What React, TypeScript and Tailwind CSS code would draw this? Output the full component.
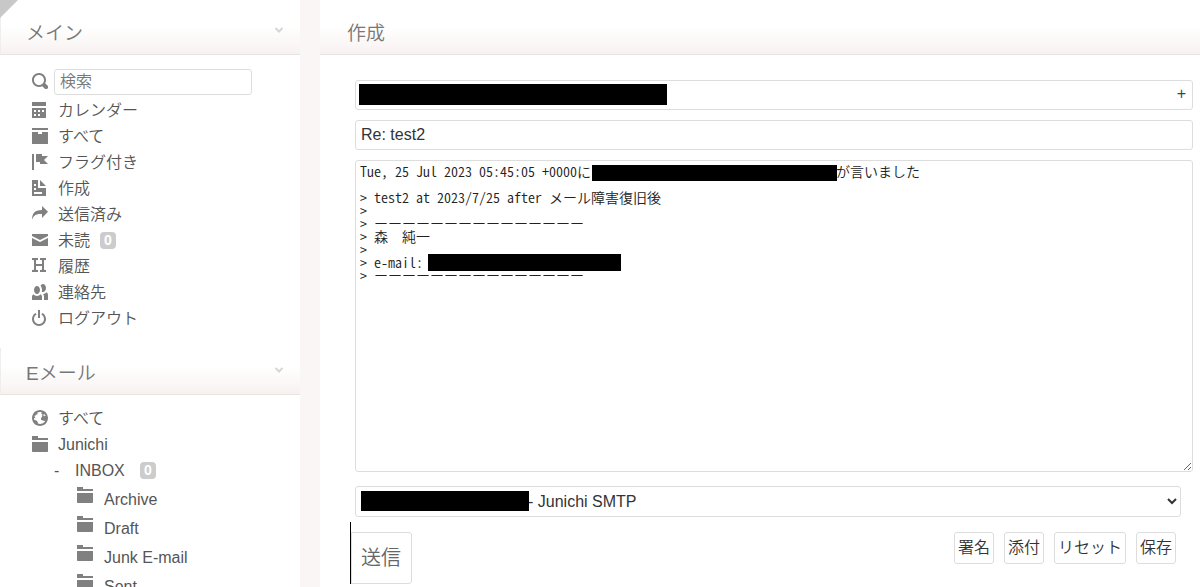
import { useState } from "react";
import type { ReactNode } from "react";

/** 8x8 グリッドのアイコン */
const ICONS = {
  search:
    "M3.5 0c-1.93 0-3.5 1.57-3.5 3.5s1.57 3.5 3.5 3.5c.59 0 1.17-.14 1.66-.41a1 1 0 0 0 .13.13l1 1a1.02 1.02 0 1 0 1.44-1.44l-1-1a1 1 0 0 0-.16-.13c.27-.49.44-1.06.44-1.66 0-1.93-1.55-3.5-3.5-3.5zm0 1c1.39 0 2.5 1.11 2.5 2.5 0 .66-.24 1.27-.66 1.72-.01.01-.02.02-.03.03a1 1 0 0 0-.13.13c-.44.4-1.04.63-1.69.63-1.39 0-2.5-1.11-2.5-2.5s1.11-2.5 2.5-2.5z",
  calendar:
    "M0 0v2h7v-2h-7zm0 3v4.91c0 .05.04.09.09.09h6.81c.05 0 .09-.04.09-.09v-4.91h-7zm1 1h1v1h-1v-1zm2 0h1v1h-1v-1zm2 0h1v1h-1v-1zm-4 2h1v1h-1v-1zm2 0h1v1h-1v-1z",
  box: "M0 0v1h8v-1h-8zm0 2v5.91c0 .05.04.09.09.09h7.81c.05 0 .09-.04.09-.09v-5.91h-2.97v1.03h-2v-1.03h-3z",
  flag: "M0 0v8h1v-8h-1zm2 0v4h2v1h4l-2-1.97 2-2.03h-3v-1h-3z",
  document:
    "M0 0v8h7v-4h-4v-4h-3zm4 0v3h3l-3-3zm-3 2h1v1h-1v-1zm0 2h1v1h-1v-1zm0 2h4v1h-4v-1z",
  share: "M5 0v2c-4 0-5 2.05-5 5 .52-1.98 2-3 4-3h1v2l3-3.16-3-2.84z",
  envelope: "M0 1v1l4 2 4-2v-1h-8zm0 2v4h8v-4l-4 2-4-2z",
  history:
    "M0 0v1h.5c.28 0 .5.22.5.5v4c0 .28-.22.5-.5.5h-.5v1h3v-1h-.5c-.28 0-.5-.22-.5-.5v-1.5h3v1.5c0 .28-.22.5-.5.5h-.5v1h3v-1h-.5c-.28 0-.5-.22-.5-.5v-4c0-.28.22-.5.5-.5h.5v-1h-3v1h.5c.28 0 .5.22.5.5v1.5h-3v-1.5c0-.28.22-.5.5-.5h.5v-1h-3z",
  people:
    "M5.5 0c-.51 0-.95.35-1.22.88.45.54.72 1.28.72 2.13 0 .29-.03.55-.09.81.19.11.38.19.59.19.83 0 1.5-.9 1.5-2s-.67-2-1.5-2zm-3 1c-.83 0-1.5.9-1.5 2s.67 2 1.5 2 1.5-.9 1.5-2-.67-2-1.5-2zm4.75 3.16c-.43.51-1.02.82-1.69.84.27.38.44.84.44 1.34v1.66h2v-2.66c0-.52-.31-.97-.75-1.19zm-6.5 1c-.44.22-.75.67-.75 1.19v1.66h5v-1.66c0-.52-.31-.97-.75-1.19-.45.53-1.06.84-1.75.84s-1.3-.32-1.75-.84z",
  power:
    "M3 0v4h1v-4h-1zm-1.28 1.44l-.38.31c-.81.64-1.34 1.64-1.34 2.75 0 1.93 1.57 3.5 3.5 3.5s3.5-1.57 3.5-3.5c0-1.11-.53-2.11-1.34-2.75l-.38-.31-.63.78.38.31c.58.46.97 1.17.97 1.97 0 1.39-1.11 2.5-2.5 2.5s-2.5-1.11-2.5-2.5c0-.8.36-1.51.94-1.97l.41-.31-.63-.78z",
  globe:
    "M4 0c-2.2 0-4 1.8-4 4s1.8 4 4 4 4-1.8 4-4-1.8-4-4-4zm0 1c.33 0 .64.09.94.19-.21.2-.45.38-.41.56.04.18.69.13.69.5 0 .27-.42.35-.13.66.35.35-.64.98-.66 1.44-.03.83.84.97 1.53.97.42 0 .53.2.5.44-.54.77-1.46 1.25-2.47 1.25-.38 0-.73-.09-1.06-.22.22-.44-.28-1.31-.75-1.59-.23-.23-.72-.14-1-.25-.09-.27-.18-.54-.19-.84.03-.05.08-.09.16-.09.19 0 .45.38.59.34.18-.04-.74-1.31-.31-1.56.2-.12.6.39.47-.16-.12-.51.36-.28.66-.41.26-.11.45-.41.13-.59-.06-.03-.13-.1-.22-.19.45-.27.97-.44 1.53-.44zm2.31 1.09c.18.22.32.46.44.72 0 .01 0 .02 0 .03-.04.07-.11.11-.22.22-.28.28-.32-.21-.44-.31-.13-.12-.6.02-.66-.13-.07-.18.5-.42.88-.53z",
  folder:
    "M0 0v2h8v-1h-5v-1h-3zm0 3v4.5c0 .28.22.5.5.5h7c.28 0 .5-.22.5-.5v-4.5h-8z",
};

type IconName = keyof typeof ICONS;

type MenuItem = {
  icon: IconName;
  label: string;
  count?: number;
};

const MAIN_MENU: MenuItem[] = [
  { icon: "calendar", label: "カレンダー" },
  { icon: "box", label: "すべて" },
  { icon: "flag", label: "フラグ付き" },
  { icon: "document", label: "作成" },
  { icon: "share", label: "送信済み" },
  { icon: "envelope", label: "未読", count: 0 },
  { icon: "history", label: "履歴" },
  { icon: "people", label: "連絡先" },
  { icon: "power", label: "ログアウト" },
];

const EMAIL_MENU: MenuItem[] = [
  { icon: "globe", label: "すべて" },
  { icon: "folder", label: "Junichi" },
];

const FOLDERS = ["Archive", "Draft", "Junk E-mail", "Sent"];

const ACTIONS = ["署名", "添付", "リセット", "保存"];

const RULE = "ー".repeat(15);

// 伏せ字部分は半角スペースで幅を確保する
const BODY = [
  `Tue, 25 Jul 2023 05:45:05 +0000に${" ".repeat(35)}が言いました`,
  "",
  "> test2 at 2023/7/25 after メール障害復旧後",
  ">",
  `> ${RULE}`,
  "> 森  純一",
  ">",
  "> e-mail:",
  `> ${RULE}`,
].join("\n");

function Icon({ name, className = "" }: { name: IconName; className?: string }) {
  return (
    <svg viewBox="0 0 8 8" className={`size-4 shrink-0 fill-[#808080] ${className}`} aria-hidden="true">
      <path d={ICONS[name]} />
    </svg>
  );
}

function Badge({ children }: { children: ReactNode }) {
  return (
    <span className="flex h-[17px] w-4 items-center justify-center rounded bg-[#ccc] text-sm font-bold text-white">
      {children}
    </span>
  );
}

function SectionHeader({
  title,
  isOpen,
  onToggle,
}: {
  title: string;
  isOpen: boolean;
  onToggle: () => void;
}) {
  return (
    <button
      type="button"
      aria-expanded={isOpen}
      onClick={onToggle}
      className="flex h-[47px] w-full items-center justify-between border-b border-l border-b-[#e9e3e1] border-l-[#eee] bg-linear-to-b from-white from-40% to-[#f7f2f0] pr-4 pl-[25px] text-[19px] text-[#777]"
    >
      <span className="pt-1.5">{title}</span>
      <svg viewBox="0 0 10 8" className="mb-0.5 h-2 w-2.5" aria-hidden="true">
        <path d="M1.5 2 5 5.5 8.5 2" fill="none" stroke="#d6d6d6" strokeWidth="2" />
      </svg>
    </button>
  );
}

function MenuLink({ item }: { item: MenuItem }) {
  return (
    <li>
      <a href="#" className="flex h-[26px] items-center">
        <Icon name={item.icon} />
        <span className="ml-2.5 pt-0.5">{item.label}</span>
        {item.count !== undefined && (
          <span className="ml-2.5">
            <Badge>{item.count}</Badge>
          </span>
        )}
      </a>
    </li>
  );
}

function Sidebar() {
  const [mainOpen, setMainOpen] = useState(true);
  const [emailOpen, setEmailOpen] = useState(true);

  return (
    <nav className="relative w-[300px] shrink-0 overflow-hidden bg-white pt-2 text-[#555]">
      <div className="absolute top-0 left-0 size-[18px] bg-[#c8c8c8] [clip-path:polygon(0_0,100%_0,0_100%)]" />

      <SectionHeader title="メイン" isOpen={mainOpen} onToggle={() => setMainOpen(!mainOpen)} />
      {mainOpen && (
        <div className="pt-3.5 pb-[17px] pl-8">
          <label className="flex h-7 items-start gap-1.5">
            <Icon name="search" className="mt-1" />
            <input
              type="search"
              aria-label="検索"
              placeholder="検索"
              className="h-[26px] w-[198px] rounded-[3px] border border-[#ddd] px-[5px] placeholder:text-[#777]"
            />
          </label>
          <ul>
            {MAIN_MENU.map((item) => (
              <MenuLink key={item.label} item={item} />
            ))}
          </ul>
        </div>
      )}

      <SectionHeader title="Eメール" isOpen={emailOpen} onToggle={() => setEmailOpen(!emailOpen)} />
      {emailOpen && (
        <ul className="pt-2.5 pl-8">
          {EMAIL_MENU.map((item) => (
            <MenuLink key={item.label} item={item} />
          ))}
          <li>
            <div className="flex h-[26px] items-center pl-[22px]">
              <a href="#" className="w-[21px] pt-0.5">
                -
              </a>
              <a href="#" className="flex items-center gap-[15px]">
                <span className="pt-0.5">INBOX</span>
                <Badge>0</Badge>
              </a>
            </div>
            <ul className="pt-px pl-[45px]">
              {FOLDERS.map((folder) => (
                <li key={folder}>
                  <a href="#" className="flex h-[29px] items-start gap-[11px] leading-[31px]">
                    <Icon name="folder" className="mt-[3px]" />
                    {folder}
                  </a>
                </li>
              ))}
            </ul>
          </li>
        </ul>
      )}
    </nav>
  );
}

function Compose() {
  const [to, setTo] = useState("");
  const [subject, setSubject] = useState("Re: test2");
  const [body, setBody] = useState(BODY);

  return (
    <main className="min-w-0 flex-1 bg-white pt-2 text-[#333]">
      <h1 className="flex h-[47px] items-center border-b border-[#e9e3e1] bg-linear-to-b from-white from-40% to-[#f7f2f0] pl-[27px] text-[19px] text-[#777]">
        <span className="pt-1.5">作成</span>
      </h1>

      <form className="pt-[25px] pr-[7px] pl-[35px]" onSubmit={(e) => e.preventDefault()}>
        <div className="relative">
          <input
            type="text"
            aria-label="宛先"
            value={to}
            onChange={(e) => setTo(e.target.value)}
            className="block h-[30px] w-full rounded-[3px] border border-[#ddd] px-[5px]"
          />
          <span className="absolute top-1 left-1 h-[21px] w-[308px] bg-black" />
          <button type="button" className="absolute top-0 right-[7px] h-7 text-[#1f4f58]">
            +
          </button>
        </div>

        <input
          type="text"
          aria-label="件名"
          value={subject}
          onChange={(e) => setSubject(e.target.value)}
          className="mt-2.5 block h-[30px] w-full rounded-[3px] border border-[#ddd] px-[5px]"
        />

        <div className="relative mt-2.5">
          <textarea
            aria-label="本文"
            value={body}
            onChange={(e) => setBody(e.target.value)}
            className="block h-[312px] w-full rounded-[3px] border border-[#ddd] p-1 font-['Noto_Sans_CJK_JP',monospace] text-sm leading-[13px] text-[#222] [font-feature-settings:'hwid']"
          />
          <span className="absolute top-[5px] left-[237px] h-4 w-[245px] bg-black" />
          <span className="absolute top-[94px] left-[73px] h-[17px] w-[193px] bg-black" />
        </div>

        <div className="relative mt-3.5 mr-3">
          <select
            aria-label="送信サーバー"
            className="block h-[31px] w-full rounded-[3px] border border-[#ddd] bg-white pl-[168px]"
          >
            <option>- Junichi SMTP</option>
          </select>
          <span className="absolute top-[5px] left-1.5 h-5 w-[168px] bg-black" />
        </div>

        <div className="-ml-[5px] mt-[5px] flex items-start justify-between pr-[17px]">
          <div className="border-l border-black pt-2.5">
            <button
              type="submit"
              className="h-[52px] rounded-r-[3px] border border-[#ddd] pr-2.5 pl-[9px] text-xl text-[#666]"
            >
              送信
            </button>
          </div>
          <div className="flex gap-2.5 pt-2.5">
            {ACTIONS.map((action) => (
              <button key={action} type="button" className="h-8 rounded-[3px] border border-[#ddd] px-[3px]">
                {action}
              </button>
            ))}
          </div>
        </div>
      </form>
    </main>
  );
}

export default function App() {
  return (
    <div className="flex h-screen gap-5 overflow-hidden bg-[#faf6f5] font-['Liberation_Sans','Noto_Sans_CJK_JP',sans-serif] text-base font-[350]">
      <Sidebar />
      <Compose />
    </div>
  );
}
